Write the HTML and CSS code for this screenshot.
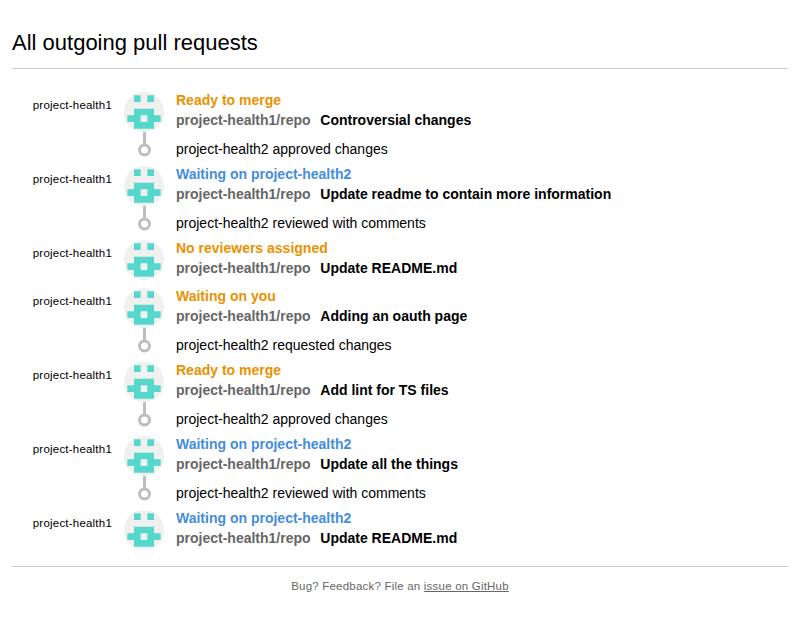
FILE: index.html
```
<!DOCTYPE html>
<html lang="en">
<head>
<meta charset="utf-8">
<title>All outgoing pull requests</title>
<link rel="stylesheet" href="styles.css">
</head>
<body>
<svg class="defs" aria-hidden="true">
  <symbol id="avatar" viewBox="0 0 420 420">
    <path fill="#f0f0f0" d="M0 0h420v420H0z"/>
    <path fill="#56d7cb" fill-rule="evenodd" d="M105 35h70v70h-70zM245 35h70v70h-70zM105 175h210v70h70v70h-70v70H105v-70H35v-70h70zM175 245v70h70v-70z"/>
  </symbol>
</svg>
<h1>All outgoing pull requests</h1>
<main id="list">
  <article class="pr">
    <div class="author">project-health1</div>
    <svg class="avatar"><use href="#avatar"/></svg>
    <div class="info"><div class="status action">Ready to merge</div><div class="title"><span class="repo">project-health1/repo</span>Controversial changes</div></div>
    <div class="marker"></div><div class="event">project-health2 approved changes</div>
  </article>
  <article class="pr">
    <div class="author">project-health1</div>
    <svg class="avatar"><use href="#avatar"/></svg>
    <div class="info"><div class="status waiting">Waiting on project-health2</div><div class="title"><span class="repo">project-health1/repo</span>Update readme to contain more information</div></div>
    <div class="marker"></div><div class="event">project-health2 reviewed with comments</div>
  </article>
  <article class="pr">
    <div class="author">project-health1</div>
    <svg class="avatar"><use href="#avatar"/></svg>
    <div class="info"><div class="status action">No reviewers assigned</div><div class="title"><span class="repo">project-health1/repo</span>Update README.md</div></div>
  </article>
  <article class="pr">
    <div class="author">project-health1</div>
    <svg class="avatar"><use href="#avatar"/></svg>
    <div class="info"><div class="status action">Waiting on you</div><div class="title"><span class="repo">project-health1/repo</span>Adding an oauth page</div></div>
    <div class="marker"></div><div class="event">project-health2 requested changes</div>
  </article>
  <article class="pr">
    <div class="author">project-health1</div>
    <svg class="avatar"><use href="#avatar"/></svg>
    <div class="info"><div class="status action">Ready to merge</div><div class="title"><span class="repo">project-health1/repo</span>Add lint for TS files</div></div>
    <div class="marker"></div><div class="event">project-health2 approved changes</div>
  </article>
  <article class="pr">
    <div class="author">project-health1</div>
    <svg class="avatar"><use href="#avatar"/></svg>
    <div class="info"><div class="status waiting">Waiting on project-health2</div><div class="title"><span class="repo">project-health1/repo</span>Update all the things</div></div>
    <div class="marker"></div><div class="event">project-health2 reviewed with comments</div>
  </article>
  <article class="pr">
    <div class="author">project-health1</div>
    <svg class="avatar"><use href="#avatar"/></svg>
    <div class="info"><div class="status waiting">Waiting on project-health2</div><div class="title"><span class="repo">project-health1/repo</span>Update README.md</div></div>
  </article>
</main>
<footer>Bug? Feedback? File an <a href="#">issue on GitHub</a></footer>
</body>
</html>
```
FILE: styles.css
```
body {
  margin: 0;
  padding: 0 12px;
  background: #fff;
  color: #000;
  font: 14px/20px "Liberation Sans", Arial, sans-serif;
}
.defs {
  position: absolute;
  width: 0;
  height: 0;
}
h1 {
  margin: 0;
  padding: 30px 0 13px;
  border-bottom: 1px solid #ccc;
  font-size: 22px;
  font-weight: 400;
  line-height: 25px;
}
#list {
  padding: 23px 0 8px;
  border-bottom: 1px solid #ccc;
}
.pr {
  display: grid;
  grid-template-columns: 100px 40px 1fr;
  column-gap: 12px;
  margin-bottom: 8px;
}
.author {
  padding-top: 3px;
  font-size: 11.5px;
  letter-spacing: 0.21px;
  text-align: right;
}
.avatar {
  display: block;
  width: 40px;
  height: 40px;
  border-radius: 50%;
}
.info {
  margin-top: -2px;
  font-weight: 700;
}
.action {
  color: #eb9100;
}
.waiting {
  color: #448ddc;
}
.repo {
  margin-right: 9.7px;
  color: #666;
}
.marker {
  grid-column: 2;
  display: flex;
  flex-direction: column;
  align-items: center;
  height: 26px;
  padding-left: 1px;
}
.marker::before {
  content: "";
  width: 3px;
  height: 12px;
  background: #bebebe;
}
.marker::after {
  content: "";
  box-sizing: border-box;
  width: 13px;
  height: 13px;
  margin-top: -1px;
  border: 3px solid #bebebe;
  border-radius: 50%;
  transform: translateY(0.5px);
}
.event {
  padding-top: 7px;
  height: 19px;
}
footer {
  padding-top: 9px;
  color: #666;
  font-size: 11.5px;
  letter-spacing: 0.21px;
  text-align: center;
}
footer a {
  color: inherit;
}
```
